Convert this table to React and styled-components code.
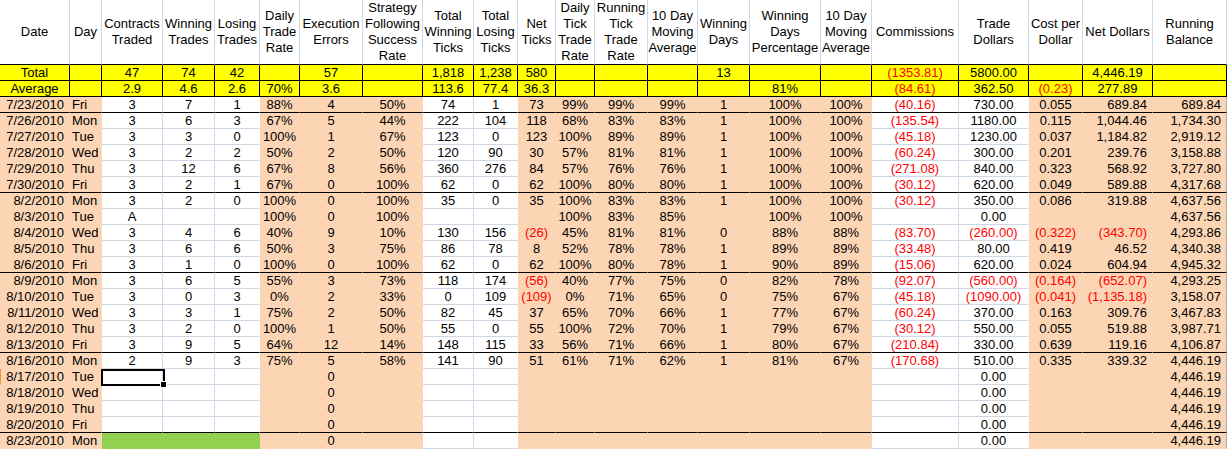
import styled, { createGlobalStyle } from 'styled-components';

const GlobalStyle = createGlobalStyle`
	body {
		margin: 0;
		background: #fff;
		font-family: 'Liberation Sans', Arial, sans-serif;
		font-size: 13px;
		color: #000;
	}
`;

const GRID = '#d0d7e5';
const PEACH = '#fcd5b4';

// w = white data column, p = peach data column
const columns = [
	{ title: 'Date', width: 70, fill: 'p', align: 'right' },
	{ title: 'Day', width: 32, fill: 'p', align: 'left' },
	{ title: 'Contracts Traded', width: 61, fill: 'w' },
	{ title: 'Winning Trades', width: 52, fill: 'w' },
	{ title: 'Losing Trades', width: 45, fill: 'w' },
	{ title: 'Daily Trade Rate', width: 40, fill: 'p' },
	{ title: 'Execution Errors', width: 63, fill: 'p' },
	{ title: 'Strategy Following Success Rate', width: 60, fill: 'p' },
	{ title: 'Total Winning Ticks', width: 51, fill: 'w' },
	{ title: 'Total Losing Ticks', width: 44, fill: 'w' },
	{ title: 'Net Ticks', width: 38, fill: 'p' },
	{ title: 'Daily Tick Trade Rate', width: 39, fill: 'p' },
	{ title: 'Running Tick Trade Rate', width: 53, fill: 'p' },
	{ title: '10 Day Moving Average', width: 50, fill: 'p' },
	{ title: 'Winning Days', width: 52, fill: 'p' },
	{ title: 'Winning Days Percentage', width: 71, fill: 'p' },
	{ title: '10 Day Moving Average', width: 51, fill: 'p' },
	{ title: 'Commissions', width: 87, fill: 'w' },
	{ title: 'Trade Dollars', width: 70, fill: 'w' },
	{ title: 'Cost per Dollar', width: 54, fill: 'p' },
	{ title: 'Net Dollars', width: 70, fill: 'p', align: 'right' },
	{ title: 'Running Balance', width: 74, fill: 'p', align: 'right' },
];

const totals = [
	['Total', '', '47', '74', '42', '', '57', '', '1,818', '1,238', '580', '', '', '', '13', '', '', '(1353.81)', '5800.00', '', '4,446.19', ''],
	['Average', '', '2.9', '4.6', '2.6', '70%', '3.6', '', '113.6', '77.4', '36.3', '', '', '', '', '81%', '', '(84.61)', '362.50', '(0.23)', '277.89', ''],
];

const blank = (date, day, bal) => [date, day, '', '', '', '', '0', '', '', '', '', '', '', '', '', '', '', '', '0.00', '', '', bal];

const rows = [
	['7/23/2010', 'Fri', '3', '7', '1', '88%', '4', '50%', '74', '1', '73', '99%', '99%', '99%', '1', '100%', '100%', '(40.16)', '730.00', '0.055', '689.84', '689.84'],
	['7/26/2010', 'Mon', '3', '6', '3', '67%', '5', '44%', '222', '104', '118', '68%', '83%', '83%', '1', '100%', '100%', '(135.54)', '1180.00', '0.115', '1,044.46', '1,734.30'],
	['7/27/2010', 'Tue', '3', '3', '0', '100%', '1', '67%', '123', '0', '123', '100%', '89%', '89%', '1', '100%', '100%', '(45.18)', '1230.00', '0.037', '1,184.82', '2,919.12'],
	['7/28/2010', 'Wed', '3', '2', '2', '50%', '2', '50%', '120', '90', '30', '57%', '81%', '81%', '1', '100%', '100%', '(60.24)', '300.00', '0.201', '239.76', '3,158.88'],
	['7/29/2010', 'Thu', '3', '12', '6', '67%', '8', '56%', '360', '276', '84', '57%', '76%', '76%', '1', '100%', '100%', '(271.08)', '840.00', '0.323', '568.92', '3,727.80'],
	['7/30/2010', 'Fri', '3', '2', '1', '67%', '0', '100%', '62', '0', '62', '100%', '80%', '80%', '1', '100%', '100%', '(30.12)', '620.00', '0.049', '589.88', '4,317.68'],
	['8/2/2010', 'Mon', '3', '2', '0', '100%', '0', '100%', '35', '0', '35', '100%', '83%', '83%', '1', '100%', '100%', '(30.12)', '350.00', '0.086', '319.88', '4,637.56'],
	['8/3/2010', 'Tue', 'A', '', '', '100%', '0', '100%', '', '', '', '100%', '83%', '85%', '', '100%', '100%', '', '0.00', '', '', '4,637.56'],
	['8/4/2010', 'Wed', '3', '4', '6', '40%', '9', '10%', '130', '156', '(26)', '45%', '81%', '81%', '0', '88%', '88%', '(83.70)', '(260.00)', '(0.322)', '(343.70)', '4,293.86'],
	['8/5/2010', 'Thu', '3', '6', '6', '50%', '3', '75%', '86', '78', '8', '52%', '78%', '78%', '1', '89%', '89%', '(33.48)', '80.00', '0.419', '46.52', '4,340.38'],
	['8/6/2010', 'Fri', '3', '1', '0', '100%', '0', '100%', '62', '0', '62', '100%', '80%', '78%', '1', '90%', '89%', '(15.06)', '620.00', '0.024', '604.94', '4,945.32'],
	['8/9/2010', 'Mon', '3', '6', '5', '55%', '3', '73%', '118', '174', '(56)', '40%', '77%', '75%', '0', '82%', '78%', '(92.07)', '(560.00)', '(0.164)', '(652.07)', '4,293.25'],
	['8/10/2010', 'Tue', '3', '0', '3', '0%', '2', '33%', '0', '109', '(109)', '0%', '71%', '65%', '0', '75%', '67%', '(45.18)', '(1090.00)', '(0.041)', '(1,135.18)', '3,158.07'],
	['8/11/2010', 'Wed', '3', '3', '1', '75%', '2', '50%', '82', '45', '37', '65%', '70%', '66%', '1', '77%', '67%', '(60.24)', '370.00', '0.163', '309.76', '3,467.83'],
	['8/12/2010', 'Thu', '3', '2', '0', '100%', '1', '50%', '55', '0', '55', '100%', '72%', '70%', '1', '79%', '67%', '(30.12)', '550.00', '0.055', '519.88', '3,987.71'],
	['8/13/2010', 'Fri', '3', '9', '5', '64%', '12', '14%', '148', '115', '33', '56%', '71%', '66%', '1', '80%', '67%', '(210.84)', '330.00', '0.639', '119.16', '4,106.87'],
	['8/16/2010', 'Mon', '2', '9', '3', '75%', '5', '58%', '141', '90', '51', '61%', '71%', '62%', '1', '81%', '67%', '(170.68)', '510.00', '0.335', '339.32', '4,446.19'],
	blank('8/17/2010', 'Tue', '4,446.19'),
	blank('8/18/2010', 'Wed', '4,446.19'),
	blank('8/19/2010', 'Thu', '4,446.19'),
	blank('8/20/2010', 'Fri', '4,446.19'),
	blank('8/23/2010', 'Mon', '4,446.19'),
];

const Wrapper = styled.div`
	position: relative;
	width: 1228px;
	height: 450px;
	overflow: hidden;
`;

const Sheet = styled.div`
	display: grid;
	grid-template-columns: ${columns.map((c) => c.width + 'px').join(' ')};
	grid-template-rows: 65px repeat(${totals.length + rows.length}, 16px);
`;

const HeadCell = styled.div`
	box-sizing: border-box;
	display: flex;
	align-items: center;
	justify-content: center;
	text-align: center;
	line-height: 16px;
	padding: 0 1px;
	background: #fff;
	border-right: 1px solid ${GRID};
	border-bottom: 1px solid #000;
`;

const TotalCell = styled.div`
	box-sizing: border-box;
	line-height: 15px;
	text-align: center;
	white-space: nowrap;
	overflow: hidden;
	background: #ffff00;
	border-right: 1px solid #000;
	border-bottom: 1px solid #000;
	color: ${(p) => (p.$red ? '#ff0000' : '#000')};
`;

const Cell = styled.div`
	box-sizing: border-box;
	line-height: 16px;
	white-space: nowrap;
	overflow: hidden;
	padding: 0 ${(p) => (p.$align === 'right' ? '5px' : '2px')} 0 2px;
	text-align: ${(p) => p.$align || 'center'};
	background: ${(p) => (p.$fill === 'w' ? '#fff' : PEACH)};
	color: ${(p) => (p.$red ? '#ff0000' : '#000')};
	border-right: 1px solid ${(p) => (p.$gridRight ? GRID : 'transparent')};
	border-bottom: 1px solid
		${(p) => (p.$week ? '#000' : p.$fill === 'w' ? GRID : 'transparent')};
	border-left: ${(p) => (p.$marker ? '1px solid #f29436' : 'none')};
	${(p) => p.$edge && 'border-right: 1px solid #b0b0b0;'}
`;

const GreenCell = styled.div`
	grid-column: span 3;
	background: #92d050;
`;

const Selection = styled.div`
	position: absolute;
	left: 101px;
	top: 369px;
	width: 64px;
	height: 17px;
	box-sizing: border-box;
	border: 2px solid #000;
`;

const Handle = styled.span`
	position: absolute;
	right: -4px;
	bottom: -4px;
	width: 5px;
	height: 5px;
	background: #000;
	border: 1px solid #fff;
`;

const isRed = (v) => v.startsWith('(');

export default function App() {
	return (
		<Wrapper>
			<GlobalStyle />
			<Sheet>
				{columns.map((c, i) => (
					<HeadCell key={'h' + i}>{c.title}</HeadCell>
				))}
				{totals.map((row, r) =>
					row.map((v, i) => (
						<TotalCell key={'t' + r + '-' + i} $red={isRed(v)}>
							{v}
						</TotalCell>
					))
				)}
				{rows.map((row, r) => {
					const week = row[1] === 'Fri';
					const last = r === rows.length - 1;
					return row.map((v, i) => {
						if (last && i >= 2 && i <= 4) {
							return i === 2 ? <GreenCell key={'g' + r} /> : null;
						}
						const col = columns[i];
						const next = columns[i + 1];
						return (
							<Cell
								key={r + '-' + i}
								$fill={col.fill}
								$align={col.align}
								$red={isRed(v)}
								$week={week && !last}
								$gridRight={col.fill === 'w' && next && next.fill === 'w'}
								$marker={i === 0 && r === 17}
								$edge={i === columns.length - 1}>
								{v}
							</Cell>
						);
					});
				})}
			</Sheet>
			<Selection>
				<Handle />
			</Selection>
		</Wrapper>
	);
}
